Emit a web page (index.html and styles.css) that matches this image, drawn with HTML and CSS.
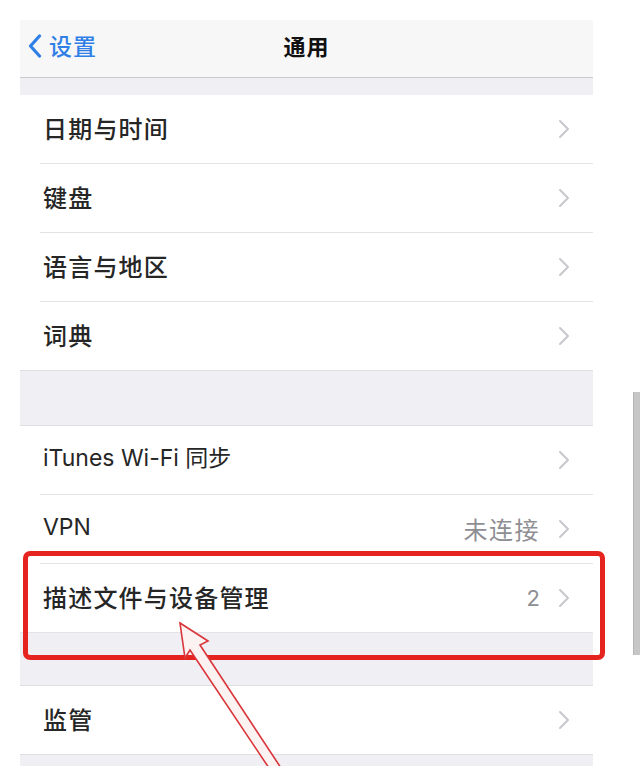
FILE: index.html
```html
<!DOCTYPE html>
<html lang="zh-CN">
<head>
<meta charset="utf-8">
<title>通用</title>
<link rel="stylesheet" href="styles.css">
</head>
<body>
<div class="screen">
  <header class="navbar">
    <div class="back">
      <svg class="back-icon" width="14" height="24" viewBox="0 0 14 24"><polyline points="11.5,2 2.5,12 11.5,22" fill="none" stroke="#2f7fe6" stroke-width="3.2" stroke-linecap="round" stroke-linejoin="round"/></svg>
      <span class="back-label">设置</span>
    </div>
    <div class="title">通用</div>
  </header>
  <div class="gap gap-top"></div>
  <section class="group">
    <div class="row"><span class="label">日期与时间</span><span class="right"><svg class="chev" width="12" height="20" viewBox="0 0 12 20"><polyline points="2,2 10,10 2,18" fill="none" stroke="#c7c7cc" stroke-width="2" stroke-linecap="round" stroke-linejoin="round"/></svg></span></div>
    <div class="row"><span class="label">键盘</span><span class="right"><svg class="chev" width="12" height="20" viewBox="0 0 12 20"><polyline points="2,2 10,10 2,18" fill="none" stroke="#c7c7cc" stroke-width="2" stroke-linecap="round" stroke-linejoin="round"/></svg></span></div>
    <div class="row"><span class="label">语言与地区</span><span class="right"><svg class="chev" width="12" height="20" viewBox="0 0 12 20"><polyline points="2,2 10,10 2,18" fill="none" stroke="#c7c7cc" stroke-width="2" stroke-linecap="round" stroke-linejoin="round"/></svg></span></div>
    <div class="row"><span class="label">词典</span><span class="right"><svg class="chev" width="12" height="20" viewBox="0 0 12 20"><polyline points="2,2 10,10 2,18" fill="none" stroke="#c7c7cc" stroke-width="2" stroke-linecap="round" stroke-linejoin="round"/></svg></span></div>
  </section>
  <div class="gap gap-mid"></div>
  <section class="group">
    <div class="row"><span class="label latin">iTunes Wi-Fi 同步</span><span class="right"><svg class="chev" width="12" height="20" viewBox="0 0 12 20"><polyline points="2,2 10,10 2,18" fill="none" stroke="#c7c7cc" stroke-width="2" stroke-linecap="round" stroke-linejoin="round"/></svg></span></div>
    <div class="row"><span class="label latin">VPN</span><span class="right"><span class="detail">未连接</span><svg class="chev" width="12" height="20" viewBox="0 0 12 20"><polyline points="2,2 10,10 2,18" fill="none" stroke="#c7c7cc" stroke-width="2" stroke-linecap="round" stroke-linejoin="round"/></svg></span></div>
    <div class="row"><span class="label">描述文件与设备管理</span><span class="right"><span class="detail num">2</span><svg class="chev" width="12" height="20" viewBox="0 0 12 20"><polyline points="2,2 10,10 2,18" fill="none" stroke="#c7c7cc" stroke-width="2" stroke-linecap="round" stroke-linejoin="round"/></svg></span></div>
  </section>
  <div class="gap gap-mid2"></div>
  <section class="group">
    <div class="row"><span class="label">监管</span><span class="right"><svg class="chev" width="12" height="20" viewBox="0 0 12 20"><polyline points="2,2 10,10 2,18" fill="none" stroke="#c7c7cc" stroke-width="2" stroke-linecap="round" stroke-linejoin="round"/></svg></span></div>
  </section>
  <div class="gap gap-bottom"></div>
</div>

<div class="highlight"></div>
<svg class="arrow" width="640" height="766" viewBox="0 0 640 766">
  <polygon points="180,623 208,641 200,645 281,768 269,768 190,650 185,658" fill="#fdf2f2" stroke="#d9353a" stroke-width="1.6" stroke-linejoin="miter"/>
</svg>
<div class="sidebar"></div>
</body>
</html>
```

FILE: styles.css
```css
html, body {
  margin: 0;
  padding: 0;
  background: #ffffff;
  height: 766px;
  overflow: hidden;
}

body {
  font-family: "Noto Sans CJK SC", "Noto Sans", sans-serif;
  color: #202020;
  position: relative;
}

.screen {
  margin: 20px 0 0 20px;
  width: 573px;
  background: #efeff4;
}

.navbar {
  height: 57px;
  box-sizing: content-box;
  background: #f7f7f8;
  border-bottom: 1px solid #c9c9ce;
  display: flex;
  align-items: center;
  position: relative;
  padding-bottom: 0;
}

.back {
  display: flex;
  align-items: center;
  gap: 7px;
  padding-left: 8px;
  margin-top: -6px;
  color: #2f7fe6;
}

.back-icon {
  display: block;
}

.back-label {
  font-size: 23px;
  letter-spacing: 1px;
  line-height: 1;
  font-weight: 500;
}

.title {
  position: absolute;
  left: 0;
  right: 0;
  top: 12px;
  text-align: center;
  font-size: 22px;
  line-height: 26px;
  font-weight: 700;
  letter-spacing: 1px;
  color: #111;
  pointer-events: none;
}

.gap {
  background: #efeff4;
}

.gap-top { height: 17px; }
.gap-mid { height: 54px; border-top: 1px solid #dedee3; border-bottom: 1px solid #dedee3; }
.gap-mid2 { height: 52px; border-top: 1px solid #e4e4e8; border-bottom: 1px solid #dedee3; }
.gap-bottom { height: 20px; border-top: 1px solid #dedee3; }

.group {
  background: #ffffff;
  padding-left: 20px;
}

.row {
  height: 68px;
  display: flex;
  align-items: center;
  justify-content: space-between;
  padding-right: 23px;
  border-bottom: 1px solid #e3e3e6;
}

.row:last-child {
  border-bottom: none;
}

.label {
  font-size: 24px;
  font-weight: 500;
  letter-spacing: 1.2px;
  line-height: 1;
  padding-left: 3px;
  margin-top: -3px;
  color: #262626;
}

.label.latin {
  font-family: "Inter", "Noto Sans CJK SC", sans-serif;
  font-size: 23px;
  font-weight: 400;
  letter-spacing: 0;
}

.right {
  display: flex;
  align-items: center;
  gap: 18px;
}

.detail {
  font-size: 24px;
  letter-spacing: 1.5px;
  color: #8e8e93;
  line-height: 1;
}

.detail.num {
  font-family: "Inter", sans-serif;
  font-size: 22px;
  letter-spacing: 0;
}

.chev {
  display: block;
}

.highlight {
  position: absolute;
  left: 23px;
  top: 551px;
  width: 572px;
  height: 99px;
  border: 5px solid #e5241f;
  border-radius: 7px;
}

.arrow {
  position: absolute;
  left: 0;
  top: 0;
  pointer-events: none;
}

.sidebar {
  position: absolute;
  left: 633px;
  top: 392px;
  width: 7px;
  height: 263px;
  background: #c6c6c6;
  border-left: 1px solid #b5b5b5;
  box-sizing: border-box;
}
```
